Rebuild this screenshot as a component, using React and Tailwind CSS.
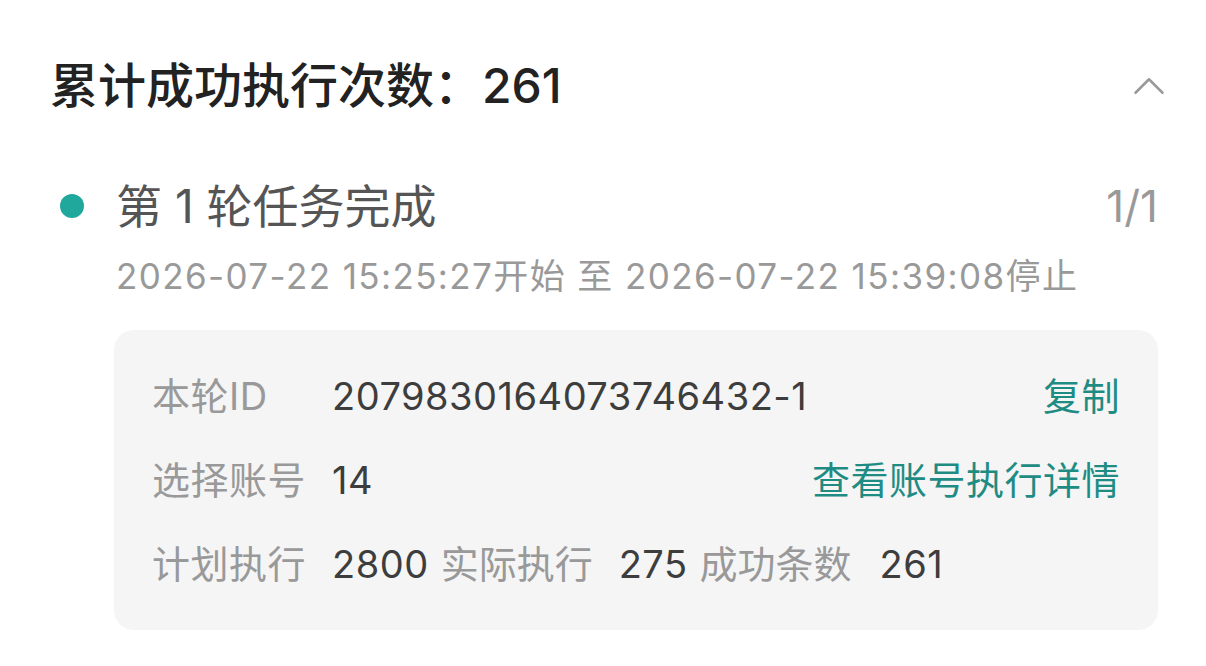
import { ChevronUp } from 'lucide-react'

const font = { fontFamily: 'Inter, "Noto Sans CJK SC", "Noto Sans", sans-serif' }

function InfoRow({ label, children, action }) {
  return (
    <div className="flex items-center h-[84px]">
      <span className="w-[180px] shrink-0 text-[#999999]">{label}</span>
      <div className="flex-1 flex items-center text-[#3d3d3d]">{children}</div>
      {action && <span className="text-[#1f8c84]">{action}</span>}
    </div>
  )
}

export default function App() {
  return (
    <div className="w-[1206px] h-[666px] bg-white overflow-hidden" style={font}>
      <div className="flex items-center justify-between pl-[50px] pr-[30px] pt-[54px]">
        <h1 className="text-[48px] leading-[64px] font-medium text-[#222222]">累计成功执行次数：261</h1>
        <ChevronUp size={54} strokeWidth={1.1} className="text-[#999999]" />
      </div>

      <div className="pl-[60px] pr-[48px] mt-[60px]">
        <div className="flex items-center h-[56px]">
          <span className="w-[24px] h-[24px] rounded-full bg-[#21a89c]" />
          <span className="ml-[32px] text-[46px] text-[#555555]">第 1 轮任务完成</span>
          <span className="ml-auto text-[44px] text-[#999999]">1/1</span>
        </div>
        <div className="pl-[56px] mt-[18px] text-[35px] leading-[48px] tracking-[1.4px] text-[#999999]">
          2026-07-22 15:25:27开始 至 2026-07-22 15:39:08停止
        </div>

        <div className="ml-[54px] mt-[30px] bg-[#f5f5f5] rounded-[20px] px-[38px] py-[24px] text-[38px] tracking-[0.5px]">
          <InfoRow label="本轮ID" action="复制">2079830164073746432-1</InfoRow>
          <InfoRow label="选择账号" action="查看账号执行详情">14</InfoRow>
          <InfoRow label="计划执行">
            <span>2800</span>
            <span className="ml-[12px] tracking-normal text-[#999999]">实际执行</span>
            <span className="ml-[26px]">275</span>
            <span className="ml-[12px] tracking-normal text-[#999999]">成功条数</span>
            <span className="ml-[28px]">261</span>
          </InfoRow>
        </div>
      </div>
    </div>
  )
}
